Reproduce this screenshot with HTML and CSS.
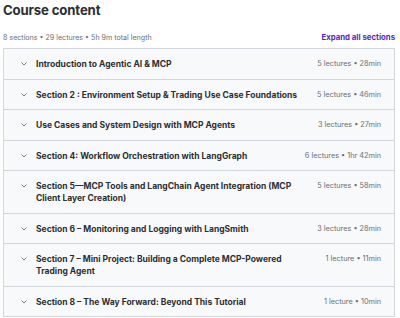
FILE: index.html
```html
<!DOCTYPE html>
<html>
<head>
<meta charset="utf-8">
<link rel="stylesheet" href="styles.css">
</head>
<body>
<div class="page">
  <h2 class="title">Course content</h2>
  <div class="summary">
    <span class="stats">8 sections • 29 lectures • 5h 9m total length</span>
    <span class="expand">Expand all sections</span>
  </div>
  <div class="list">
    <div class="row"><span class="chev"><svg width="6" height="4" viewBox="0 0 6 4"><path d="M0.5 0.5 L3 3 L5.5 0.5" fill="none" stroke="#6a6f73" stroke-width="0.9"/></svg></span><span class="name">Introduction to Agentic AI &amp; MCP</span><span class="meta">5 lectures • 28min</span></div>
    <div class="row"><span class="chev"><svg width="6" height="4" viewBox="0 0 6 4"><path d="M0.5 0.5 L3 3 L5.5 0.5" fill="none" stroke="#6a6f73" stroke-width="0.9"/></svg></span><span class="name">Section 2 : Environment Setup &amp; Trading Use Case Foundations</span><span class="meta">5 lectures • 46min</span></div>
    <div class="row"><span class="chev"><svg width="6" height="4" viewBox="0 0 6 4"><path d="M0.5 0.5 L3 3 L5.5 0.5" fill="none" stroke="#6a6f73" stroke-width="0.9"/></svg></span><span class="name">Use Cases and System Design with MCP Agents</span><span class="meta">3 lectures • 27min</span></div>
    <div class="row"><span class="chev"><svg width="6" height="4" viewBox="0 0 6 4"><path d="M0.5 0.5 L3 3 L5.5 0.5" fill="none" stroke="#6a6f73" stroke-width="0.9"/></svg></span><span class="name">Section 4: Workflow Orchestration with LangGraph</span><span class="meta">6 lectures • 1hr 42min</span></div>
    <div class="row"><span class="chev"><svg width="6" height="4" viewBox="0 0 6 4"><path d="M0.5 0.5 L3 3 L5.5 0.5" fill="none" stroke="#6a6f73" stroke-width="0.9"/></svg></span><span class="name">Section 5—MCP Tools and LangChain Agent Integration (MCP Client Layer Creation)</span><span class="meta">5 lectures • 58min</span></div>
    <div class="row"><span class="chev"><svg width="6" height="4" viewBox="0 0 6 4"><path d="M0.5 0.5 L3 3 L5.5 0.5" fill="none" stroke="#6a6f73" stroke-width="0.9"/></svg></span><span class="name">Section 6 – Monitoring and Logging with LangSmith</span><span class="meta">3 lectures • 28min</span></div>
    <div class="row"><span class="chev"><svg width="6" height="4" viewBox="0 0 6 4"><path d="M0.5 0.5 L3 3 L5.5 0.5" fill="none" stroke="#6a6f73" stroke-width="0.9"/></svg></span><span class="name">Section 7 – Mini Project: Building a Complete MCP-Powered Trading Agent</span><span class="meta">1 lecture • 11min</span></div>
    <div class="row"><span class="chev"><svg width="6" height="4" viewBox="0 0 6 4"><path d="M0.5 0.5 L3 3 L5.5 0.5" fill="none" stroke="#6a6f73" stroke-width="0.9"/></svg></span><span class="name">Section 8 – The Way Forward: Beyond This Tutorial</span><span class="meta">1 lecture • 10min</span></div>
  </div>
</div>
</body>
</html>
```
FILE: styles.css
```css
* { box-sizing: border-box; }
body {
  margin: 0;
  background: #ffffff;
  font-family: Inter, "Noto Sans", sans-serif;
  color: #2d2f31;
}
.page {
  padding: 0 5px 0 3px;
}
.title {
  margin: 0;
  padding-top: 1px;
  font-size: 13.2px;
  line-height: 18px;
  font-weight: 700;
  color: #2d2f31;
  letter-spacing: -0.15px;
}
.summary {
  display: flex;
  justify-content: space-between;
  align-items: center;
  margin-top: 12px;
  height: 12px;
  margin-bottom: 5px;
}
.stats {
  font-size: 7.1px;
  color: #6a6f73;
}
.expand {
  font-size: 7.8px;
  font-weight: 700;
  color: #5624d0;
}
.list {
  border: 1px solid #d1d7dc;
  background: #f7f9fa;
}
.row {
  display: flex;
  align-items: flex-start;
  padding: 9px 13px 8.5px 16px;
  border-top: 1px solid #d1d7dc;
}
.row:first-child { border-top: none; }
.chev {
  width: 16px;
  flex: none;
  display: flex;
  align-items: center;
  height: 12px;
  padding-left: 1px;
}
.name {
  flex: 1;
  font-size: 8.5px;
  line-height: 12px;
  font-weight: 700;
  color: #2d2f31;
  padding-right: 8px;
}
.meta {
  flex: none;
  min-width: 70px;
  text-align: right;
  font-size: 7.3px;
  line-height: 12px;
  color: #6a6f73;
}
```
